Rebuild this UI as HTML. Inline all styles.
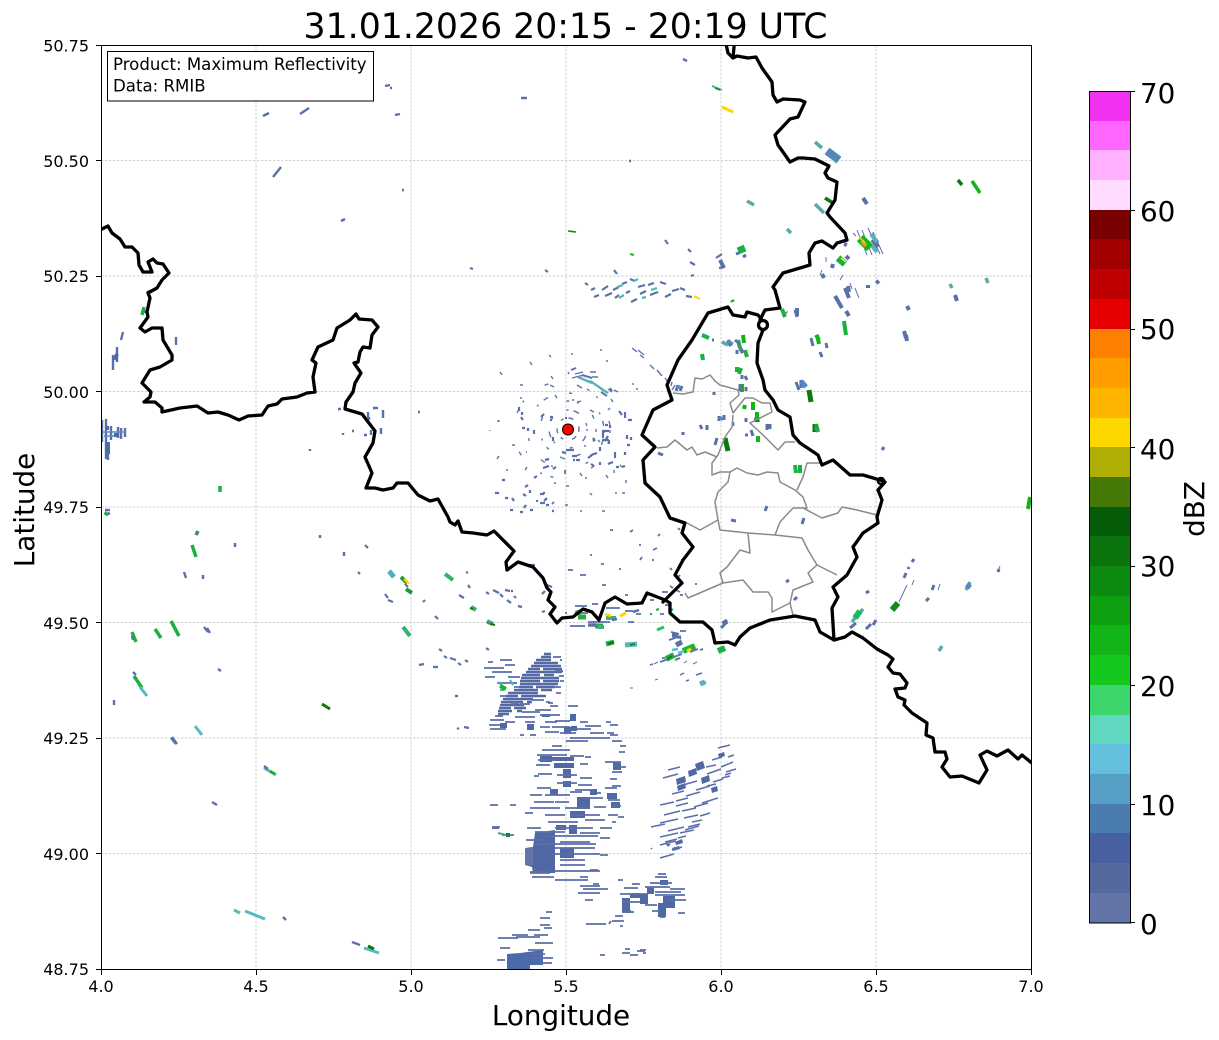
<!DOCTYPE html>
<html lang="en"><head><meta charset="utf-8"><title>Radar</title>
<style>
html,body{margin:0;padding:0;background:#fff}
svg{display:block}
text{font-family:"DejaVu Sans",sans-serif;fill:#000}
.e{fill:none;stroke-linecap:butt}
</style></head><body>
<svg width="1219" height="1040" viewBox="0 0 1219 1040" xmlns="http://www.w3.org/2000/svg">
<defs><clipPath id="ax"><rect x="101" y="45" width="930" height="924"/></clipPath></defs>
<rect width="1219" height="1040" fill="#fff"/>
<text x="565.5" y="38" font-size="34.7" text-anchor="middle">31.01.2026 20:15 - 20:19 UTC</text>

<!-- grid -->
<g stroke="#c4c4c4" stroke-width="0.8" stroke-dasharray="2.5 1.5" fill="none">
<path d="M256 45V969M411 45V969M566 45V969M721 45V969M876 45V969"/>
<path d="M101 160.5H1031M101 276H1031M101 391.5H1031M101 507H1031M101 622.5H1031M101 738H1031M101 853.5H1031"/>
</g>

<g clip-path="url(#ax)">
<!-- south echoes -->
<path class="e" stroke="#5569a3" stroke-width="2.6" d="M544 654h7M541 657h10M536 660h15M534 663h24M531 666h30M528 669h12M543 669h19M526 672h36M522 675h18M544 675h10M521 678h38M520 681h20M543 681h16M520 684h38M519 687h14M536 687h19M514 690h24M541 690h11M508 693h30M506 696h12M521 696h25M503 699h30M501 702h22M527 702h5M500 705h24M499 708h12M514 708h12M498 711h14M517 711h5M498 714h11"/>
<g fill="#5068a4">
<path d="M535 833L555 830L555 873L533 873L532 867L525 865L525 848L533 847Z" fill="#5068a6"/>
<rect x="525" y="848" width="8" height="17" fill="#6375a7"/>
<path d="M507 969V954L520 953L543 950V965L530 965V969Z" fill="#4c69aa"/>
<rect x="527" y="724" width="7" height="6"/><rect x="500" y="723" width="7" height="5"/><rect x="564" y="727" width="7" height="7"/><rect x="571" y="726" width="6" height="5"/><rect x="570" y="714" width="6" height="7"/><rect x="542" y="714" width="8" height="3"/>
<rect x="552" y="757" width="22" height="4"/><rect x="554" y="763" width="20" height="5"/><rect x="563" y="769" width="8" height="9"/><rect x="563" y="781" width="8" height="6"/><rect x="550" y="789" width="8" height="6"/><rect x="577" y="797" width="13" height="12"/><rect x="570" y="811" width="15" height="7"/><rect x="569" y="825" width="8" height="9"/><rect x="560" y="848" width="14" height="10"/><rect x="613" y="762" width="8" height="8"/><rect x="607" y="793" width="10" height="6"/><rect x="611" y="802" width="9" height="6"/><rect x="590" y="789" width="7" height="6"/><rect x="540" y="756" width="12" height="6"/><rect x="556" y="825" width="10" height="5"/>
<rect x="622" y="898" width="8" height="14"/><rect x="640" y="894" width="8" height="10"/><rect x="663" y="896" width="12" height="12"/><rect x="658" y="903" width="8" height="14"/><rect x="660" y="880" width="8" height="5"/><rect x="647" y="887" width="7" height="7"/><rect x="630" y="893" width="10" height="5"/><rect x="626" y="910" width="5" height="3"/>
<path d="M695 764l8-3 2 7-8 3zM688 771l8-3 1 6-8 3zM676 779l9-3 1 6-9 3zM701 778l8-3 1 6-8 3zM677 786l8-3 1 5-8 3zM711 788l6-2 1 5-6 2zM718 754l6-2 1 4-6 2zM672 848l7-2 1 3-7 2zM668 847l-2-3h5zM675 842l7-3 1 4-7 2z"/>
</g>
<path class="e" stroke="#5a6fa8" stroke-width="1.8" d="M500 660h12M488 662h5M484 668h20M505 665h10M492 672h20M508 677h12M485 677h10M497 683h20M514 687h6M560 660h2M553 657h8M555 671h8M564 676h-5M560 681h4M553 687h8M556 693h5M500 696h8M511 703h8M532 700h12M546 702h4M520 704h10M548 703h5M495 716h8
M490 720h14M489 725h12M490 729h16M505 722h10M515 717h20M522 712h18M535 710h16M550 706h8M540 715h20M545 722h12M525 722h10M552 727h18M555 721h15M580 722h8M585 726h16M540 727h10M545 732h14M560 733h16M575 729h16M590 733h14M606 722h5M610 725h8M607 733h7M610 735h8M570 738h40M566 741h22M530 735h6M520 735h4M568 706h10M612 741h10M620 746h6M619 752h6
M542 750h28M552 746h10M537 755h30M570 756h14M585 757h6M538 760h20M536 765h14M580 764h8M605 762h16M620 767h6M557 775h20M580 778h12M534 776h5M538 774h14M612 772h10M610 779h7M612 786h9M557 783h20M578 785h14M537 788h14M605 788h12M545 795h25M575 790h20M530 795h12M570 792h12M596 793h5M608 800h12M534 802h20M555 802h14M585 798h18M612 806h9M530 808h30M565 808h25M594 807h12M525 813h8M545 815h20M570 815h30M608 815h10M548 822h30M585 820h20M618 817h6M527 828h14M555 828h38M600 828h12M612 822h4M535 832h30M580 833h20M526 840h18M550 836h48M560 842h30M600 838h10M536 844h60M555 848h40M550 854h50M560 860h25M600 855h8M530 872h20M555 871h45M560 865h25M590 870h8M532 877h22M555 880h20M530 873h20M580 877h8M580 886h20M583 889h25M578 893h22M585 900h8M593 884h6M574 880h14M502 835h12M490 805h8M510 805h6M492 827h8
M586 924h20M600 955h5M640 950h6M630 949h-5M638 955h-8M622 953h8M643 953h3M512 935h16M516 937h24M498 938h20M500 948h10M528 950h16M530 954h15M533 958h20M534 935h14M540 925h10M540 918h10M546 912h6M544 928h8M528 930h12M535 943h18M497 960h8M525 958h4M540 963h12"/>
<path class="e" stroke="#5a6fa8" stroke-width="1.5" d="M668 770l12-3M663 778l15-4M683 785l14-4M696 790l14-4M707 774l14-5M713 782l10-3M726 772l10-3M721 767l12-5M706 767l10-2M660 805l14-3M676 801l12-3M686 796l14-4M672 794l12-3M694 807l14-4M702 803l16-5M664 815l16-4M682 811l14-3M676 806l12-3M660 823l18-4M684 818l14-3M668 831l16-4M688 827l12-3M660 837l18-4M680 833l14-3M665 842l12-3M678 838l8-2M660 845l16-4M685 830l14-4M652 848l-1 1M660 858l14-4M692 822l10-2M672 850l10-3M718 748l12-3M712 760l10-3M728 757l6-2M651 827l14-3M700 816l10-3M725 775l6-2M707 786l9-2M722 778l8-2"/>
<path class="e" stroke="#5a6fa8" stroke-width="1.8" d="M632 884h8M618 880h5M624 888h14M620 894h28M622 902h20M650 883h22M655 877h12M658 874h8M645 887h25M655 895h30M655 892h26M670 889h15M668 900h18M622 912h12M615 916h8M645 905h12M652 911h8M660 917h5M678 913h7M612 921h12M620 926h3M637 951h8M611 921l-2 3"/>
<path class="e" stroke="#49b2b8" stroke-width="2" d="M498 682l8 7M510 680l3 5M500 690h4"/>
<path class="e" stroke="#14b81a" stroke-width="4" d="M500 686l6 3"/>
<path class="e" stroke="#4f9fa0" stroke-width="2" d="M498 833l12 3"/>
<path class="e" stroke="#0c8a3a" stroke-width="4" d="M506 835h4"/>
<path class="e" stroke="#5a6fa8" stroke-width="2" d="M492 828h7"/>

<!-- radar clutter -->
<g fill="none" stroke="#5d72a8" stroke-width="1.4">
<circle cx="568" cy="429" r="11" stroke-dasharray="3 5 5 9"/>
<circle cx="568" cy="429" r="19" stroke-dasharray="2 5 6 12 3 16"/>
<circle cx="568" cy="429" r="28" stroke-dasharray="3 8 2 18 4 30"/>
<circle cx="566" cy="431" r="38" stroke-dasharray="2 7 5 22 3 34"/>
<circle cx="562" cy="430" r="48" stroke-dasharray="3 9 2 26 4 40"/>
</g>
<path class="e" stroke="#5a6fa8" stroke-width="2.2" d="M519 407v4M522 412v3M521 417l2 3M528 428v3M534 430v4M541 417l3-3M550 417h3M550 420h2M565 418h2M553 437v4M562 452l4 1M572 456h5M575 460h-2M580 460h-4M545 460l4-1M543 468l6-2M553 469l3-2M591 455l6-2M588 458l4-3M605 425h3M603 430v8M608 436l-3 5M603 431h6M602 440h7M609 440v4M593 438l2 3M625 412v6M619 411l3 4M628 420h4M627 435v4M631 437v3M627 445h3M610 425v3M600 462v3M594 466l-3-2M608 464l5-2M616 467h3M622 467l3-1M600 447v4M615 452v6M625 452v3M502 480h3M495 493h4M505 498h3M512 498l2 3M525 487l3-2M523 494l3 2M526 505l-2 3M530 490v3M534 478l3-2M537 500v2M547 498l-3 3M540 503h5M510 510h3M530 510h3M546 505h3M552 511h2M543 493h2M520 512h3M540 494h4M522 428h3M566 450h8"/>
<path class="e" stroke="#5d72a8" stroke-width="1.4" d="M520 398h2M550 385l4 2M568 372l1 2M575 374l8-2M572 378l12-3M590 372h6M592 377h6M577 385l5 3M608 389l4 3M618 392l-4-2M640 355l4 3M632 348l5 4M638 350l6 5M650 365l4 4M657 370l5 6M665 378l3 4M672 390l3-5M672 382l-1 4M633 383v2M611 399l2 3M608 410l2-2M590 410l4 2M577 402l4-1M555 395l2 3M572 400h2M520 385h3M500 372l2 3M530 362l2 3M549 355l2 2M551 376l2 3M572 353v2M606 361h2M636 389h2M600 350h2M512 445h3M526 452h1M490 430v1M497 421h3M497 459l2-3M585 445v2M598 440l2 2M620 465l2 2M614 470v3M626 480v3M622 493h3M606 475l2 3M585 478h2M580 473l2 3M590 493l2 2M615 493h2M580 511h2M602 511h3M565 505h3M554 483h2M566 486h3M506 470h2M525 470l2-3"/>
<path class="e" stroke="#5ab0ba" stroke-width="2.4" d="M578 377l14 6M590 381l12 8M600 388l8 5"/>
<path class="e" stroke="#5d72a8" stroke-width="2" d="M582 375l10 3M601 392l6 4M610 388l2 3M571 370l5-2"/>
<path class="e" stroke="#4fa0a8" stroke-width="1.5" d="M560 457l5 2"/>

<!-- north band -->
<path class="e" stroke="#5b72a8" stroke-width="2.2" d="M585 283l3 2M591 290l4-2M594 297l5-2M602 290l6-4M605 296l7-3M615 298l4-3M613 290l6-3M622 284l5-2M626 293l4-2M631 302l6-3M630 279l5 2M638 287l7-2M640 294l6-3M650 295l8-3M648 285l6-2M660 282l6 2M665 297l6-3M672 291l7-2M680 288l5 2M686 296l6 1M690 262l5 3M688 249l3 3M665 240l3 4M691 276l3-1M716 258l6-4M719 268l5-1M614 270l3 4M545 270l3 2M470 268l3 1"/>
<path class="e" stroke="#52b8b8" stroke-width="2.2" d="M619 298l5-3M617 287l6-2M634 281l4-2M651 290l6-2M642 298l4-1"/>
<path class="e" stroke="#ffd700" stroke-width="2" d="M694 296l6 3"/>
<path class="e" stroke="#1cb32a" stroke-width="2" d="M630 254l4 1"/>

<!-- light blue / block tiny -->
<path class="e" stroke="#5a70a8" stroke-width="2.4" d="M300 114l9-6M273 177l8-10M102 420v22M106 419v40M111 426v14M118 427v11M121 428v11M125 428v9M108 450v10M113 355v15M117 347v15M121 340l2-8M145 310v3M176 337v8M521 98h6M368 412v6M373 408h5M369 420v-3M381 428v6M383 410v8M364 435h3M338 409h3M420 412h-2M310 449v2M343 433v2M352 431h2M371 430v5M390 88h2M385 86l5-1M263 116l6-3M395 115l5-1M404 190h-2M345 219l-4 2M683 59l4 2M207 628l3 5M204 627l4 5M110 510h-5M106 515l4-2M320 535v3M344 556v-4M235 547v-4M184 572l2 6M203 575v4M218 669l3 2M114 700v5M172 737l5 7M212 802l5 3M283 917l3 3M629 161h2M749 203h3"/>
<path class="e" stroke="#5b8cb8" stroke-width="1.5" d="M102 432h24M104 436h14"/>
<path class="e" stroke="#4d6ba6" stroke-width="4" d="M105 428h4M108 442v12M114 435h5M115 360l2-6"/>

<!-- NE echoes -->
<path class="e" stroke="#5da8a8" stroke-width="3.5" d="M815 142l7 6M747 201l7 4M815 204l9 9M787 229l4 4M722 342l6 3M986 278l2 5M950 284l2 4M939 651l3-5M966 590l4-8M859 614l4-5M852 622l6-8"/>
<path class="e" stroke="#5088b8" stroke-width="8" d="M827 151l12 9"/>
<path class="e" stroke="#3cb8a0" stroke-width="1.5" d="M833 160l4 3"/>
<path class="e" stroke="#0a7a0e" stroke-width="3.5" d="M825 198l8 5M958 180l4 5"/>
<path class="e" stroke="#12b418" stroke-width="3.5" d="M972 181l8 12"/>
<path class="e" stroke="#5a70a8" stroke-width="4" d="M863 198l4 6M848 286l1 6M835 296l7 12M868 285v3M876 283l3-2M907 306l2 4M904 331l2 7M955 295l2 6M844 244l3 1M797 308v8M845 288l4 10M846 311l3 5M872 240l6 7M878 240l-3 2M906 335l1 6M849 259l-3-3M740 348l3 5M728 340l3 6M720 260l4 8M832 268l1-4M822 274l2 4"/>
<path class="e" stroke="#5a70a8" stroke-width="1" d="M853 233l3 3M857 230l10 25M862 230l10 25M868 228l12 26M873 232l10 22M826 257v5M822 270l-2 5M843 275l-3 5M850 283l2 6M855 288l4 10"/>
<path class="e" stroke="#1cb040" stroke-width="7" d="M738 251l7-3"/>
<path class="e" stroke="#4f6fb0" stroke-width="3" d="M736 254l3-1M743 257l3-2"/>
<path class="e" stroke="#10b820" stroke-width="9" d="M860 238l10 10"/>
<path class="e" stroke="#e59a3a" stroke-width="4" d="M862 241l4 5"/>
<path class="e" stroke="#ffd700" stroke-width="1.5" d="M859 237l6 6"/>
<path class="e" stroke="#5ab0c0" stroke-width="4" d="M871 234l6 8M872 246l5 6"/>
<path class="e" stroke="#1cb040" stroke-width="7" d="M838 258l7 6"/>
<path class="e" stroke="#eef03a" stroke-width="1.5" d="M841 258l5 4"/>
<path class="e" stroke="#1cb040" stroke-width="4" d="M782 309l3 8M844 321l2 14M816 335l3 5M741 368l-2 6M702 335l7 3M738 340l2 8M745 350l2 7M702 354l1 6M737 367v5M795 465l1 8M800 465v8M732 300l1 2"/>
<path class="e" stroke="#0a7a0e" stroke-width="5" d="M809 390l2 12M815 424v8M725 438l3 13M757 417v5"/>
<path class="e" stroke="#12b418" stroke-width="4" d="M816 424l2 8M743 335l1 8M753 402v8M757 412v8M758 436v6M742 384v8M745 405l-1 4M817 335l2 9"/>
<path class="e" stroke="#5a70a8" stroke-width="3" d="M796 382l3 8M801 380v8M735 340l5 4M683 432v3M719 416v5M724 415v5M700 425l2 4M707 425v5M717 438l-2 7M767 424v6M770 424v5M751 430l2 6M746 418v4M748 435h-3M756 420h-2M658 453l5 2M678 385l-2 6M682 386l-2 5M740 384v7M742 375v4M745 376l2 4M737 350v4M746 387v4M712 340h2M882 450l2-3M795 310l2 7M786 312l1 1M811 338l2 8M820 352l2 5M826 343l1 5M765 511l2-5M731 520l5 1M804 518l-2 6M786 582l3-2M794 600l3-3M723 624l4-4M721 628l4-4M673 637l8 0M850 628l6-5M876 620l-3 5M871 624l-5 5M926 601l3-3M932 590l2-5M998 572l1-3M912 562l2-3M909 567l-1 2M866 593l3-2M904 578l2-5M714 392l0 3"/>
<path class="e" stroke="#5088c8" stroke-width="5" d="M801 381l5 6M967 588l3-4"/>
<path class="e" stroke="#5090bf" stroke-width="3" d="M728 341l5 3M720 417l3 3M677 388l3-2M733 422l0 4M817 429l-2 1"/>
<path class="e" stroke="#1cb85c" stroke-width="6" d="M855 618l5-7"/>
<path class="e" stroke="#128c18" stroke-width="6" d="M892 610l6-7"/>
<path class="e" stroke="#5a70a8" stroke-width="1" d="M899 602l8-17M912 585l2-5"/>
<path class="e" stroke="#12b418" stroke-width="4" d="M1028 509l2-12"/>
<path class="e" stroke="#5a70a8" stroke-width="1" d="M716 88l2 1M712 86h2M1000 566l-2 6M940 584l-2 6"/>
<path class="e" stroke="#46b8a0" stroke-width="2" d="M712 86l10 4"/>
<path class="e" stroke="#0a8a10" stroke-width="1.5" d="M715 88l5 2M728 109l5 3M568 231l8 1"/>
<path class="e" stroke="#ffd700" stroke-width="3" d="M722 107l11 5"/>

<!-- W/SW coloured -->
<path class="e" stroke="#1cb040" stroke-width="3.5" d="M142 315l2-8M147 293l4-2M192 545l4 12M132 632l4 10M155 629l6 9M171 621l8 15M134 676l8 12M220 486v6M196 535l2-4M107 512l-2 3"/>
<path class="e" stroke="#5ab8c0" stroke-width="3" d="M140 687l7 9M195 726l7 9M264 768l12 7M245 911l20 8M234 910l6 3M364 948l15 5"/>
<path class="e" stroke="#0a7a0e" stroke-width="3" d="M322 704l8 5M368 946l6 3"/>
<path class="e" stroke="#5a70a8" stroke-width="2.4" d="M352 942l8 3M132 636l1 4M264 766l4 3M133 672l3 3M171 738l5 6M197 532v3"/>
<path class="e" stroke="#12b418" stroke-width="2.5" d="M270 771l5 3"/>

<path class="e" stroke="#4fb0c0" stroke-width="5" d="M389 571l5 6"/>
<path class="e" stroke="#1c9a40" stroke-width="4" d="M401 577l6 6M406 589l6 4"/>
<path class="e" stroke="#ffd700" stroke-width="2" d="M404 579l5 5"/>
<path class="e" stroke="#5a70a8" stroke-width="2.2" d="M405 584l3 3M385 594l3 4M388 600l5 2M365 545l3 3M358 572l2 2M419 665l5-1M433 667h5M425 600l-2 2M435 616l3 3M444 656l3 2M450 658l6 2M458 663l3 2M465 660l3 2M439 649l3 2M486 592l3 2M493 590l6 3M500 594l3 3M505 590l5 1M511 591h2M507 600l4 3M514 596l2 2M547 585l5 2M545 591l-3 3M459 595l5 3M468 585l2 3M466 572l2 1M520 563h4M530 565h5M518 606l4 1M542 612l3-1M486 648l3 2M455 696l3 0M464 727l5 1M457 728l2 1"/>
<path class="e" stroke="#36b070" stroke-width="4" d="M445 574l8 6M471 607l5 3M487 621l6 3M403 627l7 9"/>
<path class="e" stroke="#0a7a0e" stroke-width="2" d="M470 608l3 1M490 624l5 1"/>
<path class="e" stroke="#4f6fb0" stroke-width="2" d="M487 622l2 2"/>

<!-- south-border storm -->
<path class="e" stroke="#5a70a8" stroke-width="1.8" d="M575 606h12M578 613l10 0M588 622h22M570 626h15M565 613h2M592 604h6M606 608h14M625 611h8M628 622h6M636 614h5M650 600h4M662 592h6M660 614h4M665 605h6M680 595h3M676 590l4 2M625 595h3M580 575h6M568 570h5M602 585h4M619 569h2M601 564h3M590 555h2M610 530h3M653 550l4-2M652 560h2M660 534l-2 2M630 532l3-2M640 544v2M672 570l-2-2M684 560h-3M680 575l-2 2M695 584h2M670 586l3 2M640 560l2-3M678 528l2 2M565 470v4M554 502l-2 2"/>
<path class="e" stroke="#2fa840" stroke-width="5" d="M578 617h8M576 613l4-1M595 626h8"/>
<path class="e" stroke="#5a70a8" stroke-width="3.5" d="M588 625h8"/>
<path class="e" stroke="#34b090" stroke-width="4" d="M606 618h10M598 627h6"/>
<path class="e" stroke="#ffd700" stroke-width="3" d="M605 614l6 2M620 616l6-3"/>
<path class="e" stroke="#4f6fb0" stroke-width="2.5" d="M633 612l6-2M612 620l5-1M575 612l3 2"/>
<path class="e" stroke="#1cb040" stroke-width="2" d="M656 610l3-1M650 614h2M670 611l3-2"/>
<path class="e" stroke="#1cb040" stroke-width="5" d="M606 644l8-2"/>
<path class="e" stroke="#0a7a0e" stroke-width="2" d="M608 644l6-2"/>
<path class="e" stroke="#5ab8b0" stroke-width="5" d="M625 645l12-1"/>
<path class="e" stroke="#0a7a4e" stroke-width="1.5" d="M630 645l5-1"/>
<path class="e" stroke="#32c070" stroke-width="3" d="M657 630l7-3"/>
<path class="e" stroke="#5a70a8" stroke-width="5" d="M672 635l6 0M676 645l6-3M723 624l4-3"/>
<path class="e" stroke="#5a70a8" stroke-width="1.8" d="M660 662l22-8M669 640l6-2M680 631h6M675 660l5-2M662 658h3M702 684l4-2M690 652l8-3M671 632l8 2M700 650l3-1M678 636l3 3"/>
<path class="e" stroke="#1cb040" stroke-width="6" d="M666 659l8-4M683 651l12-5M718 651l7-3"/>
<path class="e" stroke="#0a7a0e" stroke-width="1.5" d="M667 659l5-3"/>
<path class="e" stroke="#ffd700" stroke-width="3" d="M687 651l4-2"/>
<path class="e" stroke="#5ab8d0" stroke-width="2.5" d="M678 653l6-2M672 650l6-1"/>
<path class="e" stroke="#5ab0c0" stroke-width="5" d="M700 684l5-2"/>
<path class="e" stroke="#5a70a8" stroke-width="1.5" d="M696 675l6-2M650 665l3-1M680 675l4-2M686 681l3-1"/>
<path class="e" stroke="#5a70a8" stroke-width="1" d="M684 663l3-2M693 664l4-2M655 680l3-1M630 688h3M658 662l-4 2"/>

<!-- grey admin borders -->
<g fill="none" stroke="#8a8a8a" stroke-width="1.5" stroke-linejoin="round">
<path d="M673 393L683 394L693 392L695 378L702 379L710 375L715 381L720 385L738 390L739 395L730 403L733 413L745 398L753 398L762 403L770 403L772 412L750 423L763 435L778 450L785 442L795 442"/>
<path d="M733 415L732 427L725 437L718 455L712 463L712 475L720 472L730 472L737 468L747 473L758 475L767 472L778 473L780 482L795 490L803 497L807 508L793 508L780 522L775 535L748 533L720 530L718 520L715 502L718 492L728 482L730 472"/>
<path d="M657 448L667 447L675 440L687 450L692 447L697 455L705 452L717 457"/>
<path d="M687 523L700 530L718 520"/>
<path d="M803 508L822 518L838 513L842 507L857 510L877 515"/>
<path d="M748 533L750 553L740 550L727 567L720 573L723 583L743 580L753 592L768 592L772 598L772 612L790 603L793 615"/>
<path d="M723 583L688 598L685 593"/>
<path d="M775 535L802 538L808 550L817 565L837 575"/>
<path d="M817 565L808 573L813 582L793 590L790 603"/>
<path d="M822 463L807 463L803 477L797 490"/>
</g>

<!-- black borders -->
<g fill="none" stroke="#000" stroke-width="3.3" stroke-linejoin="round" stroke-linecap="round">
<path d="M99 230L102 229L108 226L112 233L120 239L125 247L132 247L138 253L139 265L143 272L152 272L148 262L153 259L157 263L163 264L169 273L162 280L157 288L148 293L150 298L147 312L148 317L140 328L145 332L152 328L162 328L163 340L172 355L172 360L160 367L150 370L142 383L151 392L150 397L144 402L155 402L162 408L162 412L180 408L197 406L208 413L218 412L228 415L239 420L248 416L262 415L268 406L277 404L282 399L297 397L307 393L315 392L313 377L316 363L312 360L318 347L333 340L337 328L350 320L356 314L359 319L372 320L378 327L372 335L370 348L363 347L360 352L358 362L354 363L361 373L355 383L353 392L346 402L345 409L362 414L375 431L373 443L365 457L372 473L366 488L375 488L383 490L393 488L397 483L408 483L418 495L430 501L438 499L448 517L450 522L455 525L458 521L462 532L473 533L487 535L494 531L514 551L506 562L507 570L518 562L533 567L543 578L547 588L551 592L548 600L555 607L550 614L557 623L562 618L573 617L583 609L592 612L599 620L605 603L615 597L627 604L642 603L647 593L665 600L670 603L670 613L680 622L703 622L712 630L715 643L728 642L735 645L740 637L750 628L770 620L795 616L815 620L820 632L834 640L845 637L852 632L863 638L877 649L888 655L893 659L888 667L893 673L900 674L907 683L905 688L895 689L898 697L905 700L904 705L912 713L927 723L926 735L933 738L935 752L945 752L947 759L942 767L950 777L962 776L979 783L987 770L980 755L987 751L997 756L1008 750L1018 759L1022 755L1033 764"/>
<path d="M663 602L682 583L675 575L683 560L693 547L682 533L685 523L670 518L660 497L645 483L643 460L655 447L642 435L653 410L672 400L667 385L678 360L692 340L708 313L728 307L733 315L745 317L747 312L758 315L762 320"/>
<circle cx="763" cy="325" r="4.5"/>
<path d="M760 320L765 310L780 308L775 290L773 287L783 273L800 268L810 265L809 253L815 243L822 241L833 248L837 243L847 240L845 233L830 217L827 213L835 200L837 182L828 178L825 173L829 166L815 159L803 158L798 158L790 162L783 152L778 145L775 135L790 119L798 117L805 102L800 100L783 99L777 102L773 95L772 82L762 68L756 57L748 58L737 56L733 58L728 53L726 44M733 58L734 47"/>
<path d="M763 330L758 343L757 363L763 380L765 390L773 400L778 410L790 417L793 435L800 443L818 455L822 465L833 460L850 475L863 475L880 480L885 482L878 490L882 500L877 517L878 523L863 533L853 547L857 557L847 575L833 587L838 597L832 608L834 640"/>
<circle cx="881" cy="481" r="3" stroke-width="2.5"/>
</g>
</g>

<!-- marker -->
<circle cx="568" cy="429.5" r="5.5" fill="#f00" stroke="#000" stroke-width="1"/>

<!-- axes frame & ticks -->
<rect x="101.5" y="45.5" width="930" height="924" fill="none" stroke="#000" stroke-width="1"/>
<g stroke="#000" stroke-width="1">
<path d="M96 45.5H101M96 160.5H101M96 276.5H101M96 391.5H101M96 507.5H101M96 622.5H101M96 738.5H101M96 853.5H101M96 969.5H101"/>
<path d="M101.5 970V975M256.5 970V975M411.5 970V975M566.5 970V975M721.5 970V975M876.5 970V975M1031.5 970V975"/>
</g>
<g font-size="16" text-anchor="end">
<text x="89" y="51.5">50.75</text><text x="89" y="167">50.50</text><text x="89" y="282">50.25</text><text x="89" y="398">50.00</text><text x="89" y="513">49.75</text><text x="89" y="629">49.50</text><text x="89" y="744">49.25</text><text x="89" y="860">49.00</text><text x="89" y="975">48.75</text>
</g>
<g font-size="16" text-anchor="middle">
<text x="101" y="992">4.0</text><text x="256" y="992">4.5</text><text x="411" y="992">5.0</text><text x="566" y="992">5.5</text><text x="721" y="992">6.0</text><text x="876" y="992">6.5</text><text x="1031" y="992">7.0</text>
</g>
<text x="561" y="1025" font-size="27.8" text-anchor="middle">Longitude</text>
<text transform="translate(34 510) rotate(-90)" font-size="27.8" text-anchor="middle">Latitude</text>

<!-- annotation -->
<rect x="107.5" y="51.5" width="266" height="49.5" fill="#fff" stroke="#000" stroke-width="1"/>
<text x="113" y="70" font-size="16.6">Product: Maximum Reflectivity</text>
<text x="113" y="91.5" font-size="16.6">Data: RMIB</text>

<!-- colourbar -->
<g shape-rendering="crispEdges">
<rect x="1090" y="893" width="40" height="30" fill="#6375a7"/>
<rect x="1090" y="863" width="40" height="30" fill="#55699f"/>
<rect x="1090" y="833" width="40" height="30" fill="#4660a2"/>
<rect x="1090" y="804" width="40" height="29" fill="#4b7cb0"/>
<rect x="1090" y="774" width="40" height="30" fill="#559fc4"/>
<rect x="1090" y="744" width="40" height="30" fill="#63bfdc"/>
<rect x="1090" y="715" width="40" height="29" fill="#60d8c0"/>
<rect x="1090" y="685" width="40" height="30" fill="#3cd66c"/>
<rect x="1090" y="655" width="40" height="30" fill="#14c81e"/>
<rect x="1090" y="625" width="40" height="30" fill="#12b418"/>
<rect x="1090" y="596" width="40" height="29" fill="#0fa012"/>
<rect x="1090" y="566" width="40" height="30" fill="#0c8a10"/>
<rect x="1090" y="536" width="40" height="30" fill="#0a730e"/>
<rect x="1090" y="507" width="40" height="29" fill="#055c08"/>
<rect x="1090" y="477" width="40" height="30" fill="#467805"/>
<rect x="1090" y="447" width="40" height="30" fill="#aeae05"/>
<rect x="1090" y="418" width="40" height="29" fill="#ffd700"/>
<rect x="1090" y="388" width="40" height="30" fill="#ffb400"/>
<rect x="1090" y="358" width="40" height="30" fill="#ff9c00"/>
<rect x="1090" y="329" width="40" height="29" fill="#ff7f00"/>
<rect x="1090" y="299" width="40" height="30" fill="#e60000"/>
<rect x="1090" y="269" width="40" height="30" fill="#be0000"/>
<rect x="1090" y="239" width="40" height="30" fill="#a00000"/>
<rect x="1090" y="210" width="40" height="29" fill="#780000"/>
<rect x="1090" y="180" width="40" height="30" fill="#ffdcff"/>
<rect x="1090" y="150" width="40" height="30" fill="#ffb0ff"/>
<rect x="1090" y="121" width="40" height="29" fill="#ff66ff"/>
<rect x="1090" y="91" width="40" height="30" fill="#f032f0"/>
</g>
<rect x="1089.5" y="91.5" width="41" height="831.5" fill="none" stroke="#000" stroke-width="1"/>
<path d="M1130 91.5h5M1130 210.5h5M1130 329.5h5M1130 447.5h5M1130 566.5h5M1130 685.5h5M1130 804.5h5M1130 922.5h5" stroke="#000" stroke-width="1"/>
<g font-size="27.8">
<text x="1140" y="103">70</text><text x="1140" y="221">60</text><text x="1140" y="339">50</text><text x="1140" y="459">40</text><text x="1140" y="576">30</text><text x="1140" y="696">20</text><text x="1140" y="815">10</text><text x="1140" y="934">0</text>
</g>
<text transform="translate(1204 509) rotate(-90)" font-size="27.8" text-anchor="middle">dBZ</text>
</svg>
</body></html>
